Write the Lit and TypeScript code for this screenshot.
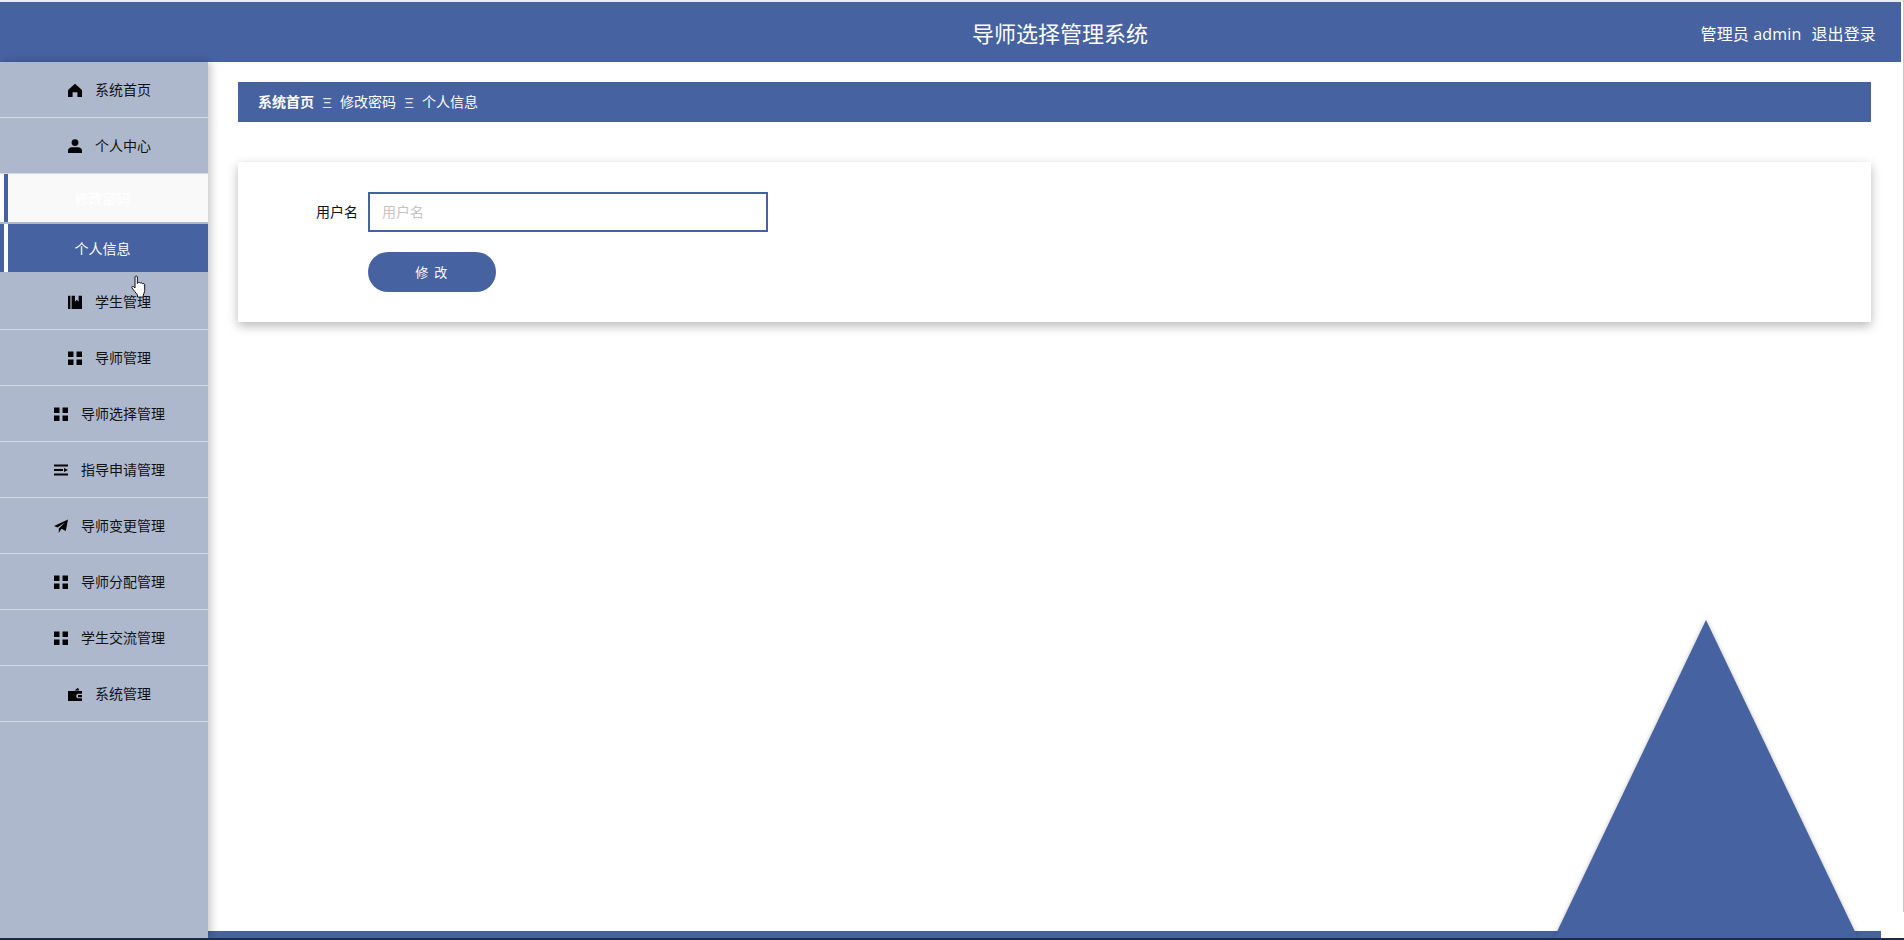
import { LitElement, html, css, svg } from "lit";
import { customElement } from "lit/decorators.js";

const ICONS: Record<string, unknown> = {
  home: svg`<path d="M7 .8 14 7v7H9.400V9.200H4.600V14H0V7z"/>`,
  user: svg`<circle cx="7" cy="3.600" r="3.400"/><path d="M0 14v-2.400C0 9.600 1.800 8.200 4 8.200h6c2.200 0 4 1.400 4 3.400V14z"/>`,
  book: svg`<path d="M0 .8h2.400V14H0zM3.600 .8h3.400v6l1.800-2 1.800 2V.8H14V14H3.600z"/>`,
  grid: svg`<path d="M0 .5h5.500V6H0zM8.500 .5H14V6H8.500zM0 8.500h5.500V14H0zM8.500 8.500H14V14H8.500z"/>`,
  list: svg`<path d="M0 1.500h14v2H0zM0 6h9v2H0zM0 10.500h14v2H0zM10 5l4 2-4 2z"/>`,
  plane: svg`<path d="M14 .5 11.800 12 7.400 9.800 4.800 14V9.500L11 3.500 3.600 8.400 0 7z"/>`,
  wallet: svg`<path d="M6.500 3.500 10 .8l1.300 2.700zM0 4h14v2.800H9.800a2.300 2.300 0 0 0 0 4.400H14V14H0zM10 8h4v2.200h-4z"/>`,
};

const MENU: { icon: string; label: string }[] = [
  { icon: "home", label: "系统首页" },
  { icon: "user", label: "个人中心" },
];
const MENU2: { icon: string; label: string }[] = [
  { icon: "book", label: "学生管理" },
  { icon: "grid", label: "导师管理" },
  { icon: "grid", label: "导师选择管理" },
  { icon: "list", label: "指导申请管理" },
  { icon: "plane", label: "导师变更管理" },
  { icon: "grid", label: "导师分配管理" },
  { icon: "grid", label: "学生交流管理" },
  { icon: "wallet", label: "系统管理" },
];

@customElement("app-root")
export class AppRoot extends LitElement {
  static styles = css`
    :host {
      display: flex;
      flex-direction: column;
      position: relative;
      width: 1904px;
      height: 940px;
      overflow: hidden;
      background: #fff;
      font-family: "Noto Sans CJK SC", "Liberation Sans", sans-serif;
      font-size: 14px;
      color: #111;
      --blue: #4662a1;
    }
    .topline {
      height: 2px;
      background: #e9ecf2;
      flex: none;
    }
    .header {
      flex: none;
      height: 60px;
      margin-right: 3px;
      background: var(--blue);
      color: #fff;
      display: grid;
      grid-template-columns: 1fr auto 1fr;
      align-items: center;
    }
    .title {
      font-size: 22px;
      line-height: 60px;
      padding-left: 219px;
    }
    .user {
      font-size: 16px;
      justify-self: end;
      padding-right: 25px;
      display: flex;
      gap: 10px;
      font-family: "Open Sans", "Noto Sans CJK SC", sans-serif;
      letter-spacing: 0.15px;
      padding-top: 1px;
    }
    .body {
      flex: 1;
      display: flex;
      min-height: 0;
      margin-bottom: 2px;
    }
    .side {
      flex: none;
      width: 208px;
      background: #aeb8cd;
      box-shadow: 3px 0 8px rgba(0, 0, 0, 0.22);
      position: relative;
      z-index: 1;
    }
    .item {
      height: 55px;
      border-bottom: 1px solid #d5dbe6;
      display: flex;
      align-items: center;
      justify-content: center;
      gap: 13px;
      padding-left: 11px;
    }
    .item span {
      padding-bottom: 2px;
    }
    .item svg {
      width: 14px;
      height: 14px;
      fill: #050505;
      flex: none;
    }
    .sub {
      height: 48px;
      display: flex;
      align-items: center;
      justify-content: center;
      color: #fff;
      margin-bottom: 2px;
      padding-right: 3px;
    }
    .sub.one {
      background: linear-gradient(90deg, #fff 4px, var(--blue) 4px, var(--blue) 8px, #f9f9f9 8px);
    }
    .sub.two {
      background: linear-gradient(90deg, var(--blue) 4px, #fff 4px, #fff 8px, var(--blue) 8px);
    }
    .main {
      flex: 1;
      padding: 20px 33px 0 30px;
      min-width: 0;
      position: relative;
    }
    .crumbs {
      height: 40px;
      background: var(--blue);
      color: #fff;
      display: flex;
      align-items: center;
      padding-left: 20px;
      gap: 8px;
    }
    .crumbs span,
    .crumbs b {
      padding-bottom: 2px;
    }
    .crumbs b {
      font-weight: 700;
    }
    .crumbs i {
      font-style: normal;
      font-size: 15px;
      font-family: "Liberation Sans", sans-serif;
      color: #dfe4ef;
      width: 10px;
      text-align: center;
    }
    .card {
      margin-top: 40px;
      height: 160px;
      box-sizing: border-box;
      padding: 30px 0 0;
      background: #fff;
      box-shadow: 0 4px 10px rgba(0, 0, 0, 0.28);
    }
    .row {
      display: flex;
      align-items: center;
      gap: 10px;
    }
    label {
      width: 120px;
      text-align: right;
      padding-bottom: 2px;
    }
    input {
      box-sizing: border-box;
      width: 400px;
      height: 40px;
      border: 2px solid var(--blue);
      outline: none;
      padding: 0 12px 2px;
      font: inherit;
      color: #333;
    }
    input::placeholder {
      color: #c4c4c4;
    }
    button {
      margin: 20px 0 0 130px;
      display: block;
      width: 128px;
      height: 40px;
      border: 0;
      border-radius: 20px;
      background: var(--blue);
      color: #fff;
      font: inherit;
      font-size: 13px;
      letter-spacing: 1.5px;
      padding: 0 0 2px;
    }
    .bar {
      position: absolute;
      left: 208px;
      width: 1673px;
      bottom: 2px;
      height: 7px;
      background: var(--blue);
    }
    .tri {
      position: absolute;
      left: 1554px;
      top: 619px;
      width: 304px;
      height: 319px;
      overflow: visible;
    }
    .tri polygon {
      fill: var(--blue);
      filter: drop-shadow(0 0 2px rgba(0, 0, 0, 0.25));
    }
    .baseline {
      position: absolute;
      left: 0;
      right: 0;
      bottom: 0;
      height: 2px;
      background: #1d2a44;
      z-index: 3;
    }
    .scroll {
      position: absolute;
      right: 0;
      top: 0;
      width: 1px;
      height: 912px;
      background: #c9c9c9;
    }
    .cursor {
      position: absolute;
      left: 131px;
      top: 275px;
      width: 17px;
      height: 23px;
      z-index: 4;
    }
  `;

  private item(m: { icon: string; label: string }) {
    return html`<div class="item">
      <svg viewBox="0 0 14 14">${ICONS[m.icon]}</svg><span>${m.label}</span>
    </div>`;
  }

  render() {
    return html`
      <div class="topline"></div>
      <header class="header">
        <span></span>
        <div class="title">导师选择管理系统</div>
        <div class="user"><span>管理员 admin</span><span>退出登录</span></div>
      </header>
      <div class="body">
        <nav class="side">
          ${MENU.map((m) => this.item(m))}
          <div class="sub one"><span>修改密码</span></div>
          <div class="sub two"><span>个人信息</span></div>
          ${MENU2.map((m) => this.item(m))}
        </nav>
        <main class="main">
          <div class="crumbs">
            <b>系统首页</b><i>Ξ</i><span>修改密码</span><i>Ξ</i><span>个人信息</span>
          </div>
          <section class="card">
            <div class="row">
              <label>用户名</label>
              <input placeholder="用户名" />
            </div>
            <button>修 改</button>
          </section>
        </main>
      </div>
      <div class="bar"></div>
      <svg class="tri" viewBox="0 0 304 319"><polygon points="152,1 304,319 0,319" /></svg>
      <div class="baseline"></div>
      <div class="scroll"></div>
      <svg class="cursor" viewBox="0 0 17 22">
        <path
          d="M4 1.500c0-1.300 2.400-1.300 2.400 0V8l.4-.6c.5-.8 2.200-.6 2.400.3.500-.7 2.100-.5 2.300.5.600-.5 2.100-.2 2.200 1V15c0 2-1 3-1.400 4.500v2H6.500v-2C5 17 2.500 15 1 12.500c-.7-1.200.7-2.300 1.700-1.300L4 12.500z"
          fill="#fff"
          stroke="#111"
          stroke-width="1"
        />
      </svg>
    `;
  }
}
